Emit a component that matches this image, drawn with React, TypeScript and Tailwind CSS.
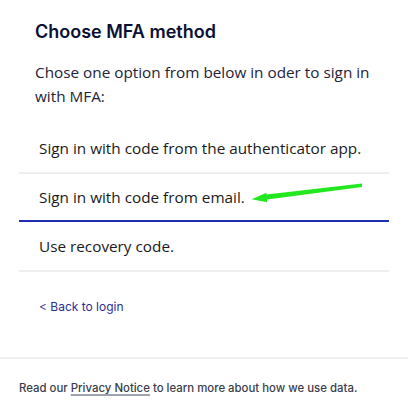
import React from "react";

export default function App() {
  const inter = { fontFamily: "Inter, 'Noto Sans', sans-serif" };
  return (
    <div className="relative w-[408px] h-[414px] bg-white overflow-hidden" style={inter}>
      <div className="px-[19px] pt-[18px]">
        <div className="px-[16px]">
          <h1 className="text-[18px] leading-[28px] font-semibold text-[#0b1035] [font-family:Inter,sans-serif]">
            Choose MFA method
          </h1>
          <p className="mt-[14px] text-[15.3px] leading-[24px] text-[#22233a] [font-family:'Open_Sans','Noto_Sans',sans-serif]">
            Chose one option from below in oder to sign in with MFA:
          </p>
        </div>
        <div className="mt-[16px] [font-family:'Open_Sans','Noto_Sans',sans-serif] text-[15.3px] text-[#1a1a1a]">
          <div className="h-[50px] flex items-center px-[20px] border-b-2 border-[#efefef]">
            Sign in with code from the authenticator app.
          </div>
          <div className="h-[48px] flex items-center px-[20px] border-b-2 border-[#1f2db0]">
            Sign in with code from email.
          </div>
          <div className="h-[50px] flex items-center px-[20px] border-b-2 border-[#efefef]">
            Use recovery code.
          </div>
        </div>
        <div className="mt-[21px] px-[20px]">
          <a className="text-[12px] leading-[20px] text-[#2b2f8f]">&lt; Back to login</a>
        </div>
      </div>
      <div className="absolute left-0 right-0 top-[357px] border-t-2 border-[#f0f0f0] px-[19px] pt-[20px]">
        <p className="text-[11.4px] leading-[18px] font-medium text-[#3a3d4a]">
          Read our{" "}
          <span className="underline decoration-[#9ca3af] decoration-2 underline-offset-2">Privacy Notice</span>{" "}
          to learn more about how we use data.
        </p>
      </div>
      <svg className="absolute left-0 top-0 pointer-events-none" width="408" height="414">
        <path d="M362 183.5 L266.5 194.5 L266.5 192.8 L251.7 199.3 L267 202.3 L267 199.5 L362 187 Z" fill="#22e81f" />
      </svg>
    </div>
  );
}
